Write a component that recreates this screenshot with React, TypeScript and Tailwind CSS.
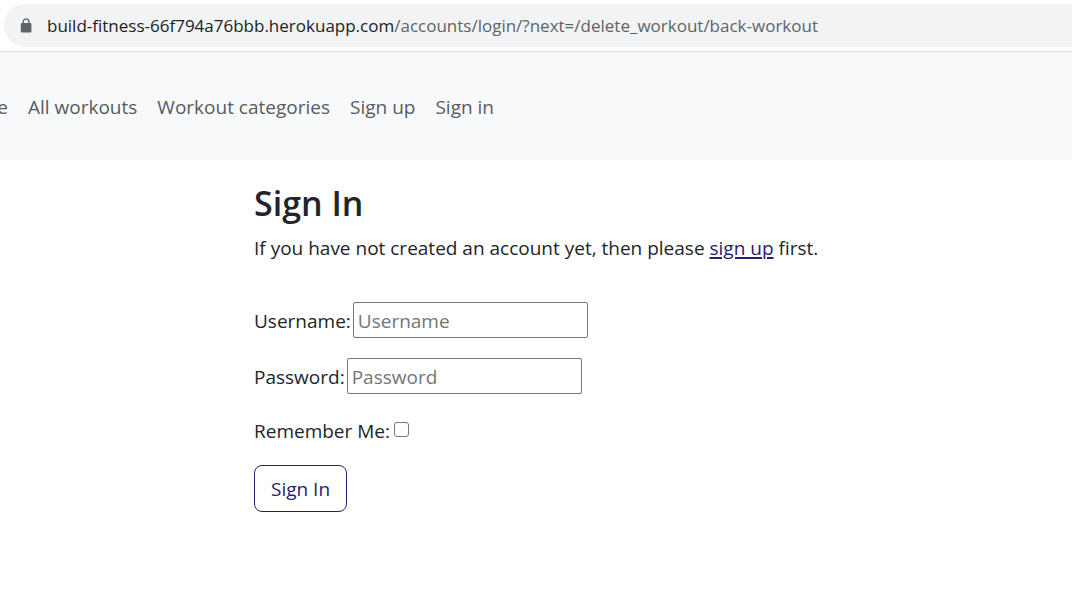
const links = ["All workouts", "Workout categories", "Sign up", "Sign in"];

const field =
  "h-9 w-[235px] rounded-[2px] border border-[#767676] bg-white px-1 pt-0.5 placeholder:text-[#757575]";

function LockIcon() {
  return (
    <svg className="h-4 w-3 shrink-0" viewBox="0 0 12 16" aria-hidden="true">
      <rect x="0.8" y="5" width="10.6" height="9.4" rx="1.2" fill="#5f6368" />
      <path d="M3.300 6V3.700a2.800 2.800 0 0 1 5.600 0V6" fill="none" stroke="#5f6368" strokeWidth="1.300" />
    </svg>
  );
}

export default function App() {
  return (
    <div className="min-h-screen overflow-x-hidden bg-white font-['Open_Sans','Noto_Sans',sans-serif] text-[#212529]">
      <div className="border-b border-[#dadce0] py-1 pl-1">
        <div className="flex h-[43px] items-center gap-[15px] rounded-l-full bg-[#f1f3f4] pl-4 text-[17px]">
          <LockIcon />
          <span className="whitespace-nowrap text-[#5f6368]">
            <span className="text-[#202124]">build-fitness-66f794a76bbb.herokuapp.com</span>
            /accounts/login/?next=/delete_workout/back-workout
          </span>
        </div>
      </div>
      <nav className="flex h-[108px] items-center gap-5 bg-[#f8f9fa] pt-0.5 text-[19px] text-[#595c5f]">
        <a href="#home" className="-ml-12 w-14 text-right">Home</a>
        {links.map((label) => (
          <a key={label} href="#nav" className="whitespace-nowrap">{label}</a>
        ))}
      </nav>
      <main className="px-[254px] pt-[21px] text-[19px] leading-[30px]">
        <h1 className="mb-2 text-[34px] leading-[44px] font-semibold">Sign In</h1>
        <p className="whitespace-nowrap">
          If you have not created an account yet, then please{" "}
          <a href="#signup" className="text-[#26216f] underline decoration-2 underline-offset-2">sign up</a> first.
        </p>
        <form className="mt-[39px] flex flex-col items-start">
          <div className="flex items-center gap-0.5">
            <label htmlFor="username" className="pt-0.5">Username:</label>
            <input id="username" placeholder="Username" className={field} />
          </div>
          <div className="mt-5 flex items-center gap-0.5">
            <label htmlFor="password" className="pt-0.5">Password:</label>
            <input id="password" type="password" placeholder="Password" className={field} />
          </div>
          <div className="mt-[18px] flex items-center gap-1">
            <label htmlFor="remember" className="pt-1">Remember Me:</label>
            <input
              id="remember"
              type="checkbox"
              className="size-[15px] appearance-none rounded-[3px] border border-[#767676] bg-white checked:bg-[#26216f]"
            />
          </div>
          <button type="button" className="mt-[19px] h-[47px] rounded-lg border border-[#26216f] px-4 text-[#26216f]">
            Sign In
          </button>
        </form>
      </main>
    </div>
  );
}
